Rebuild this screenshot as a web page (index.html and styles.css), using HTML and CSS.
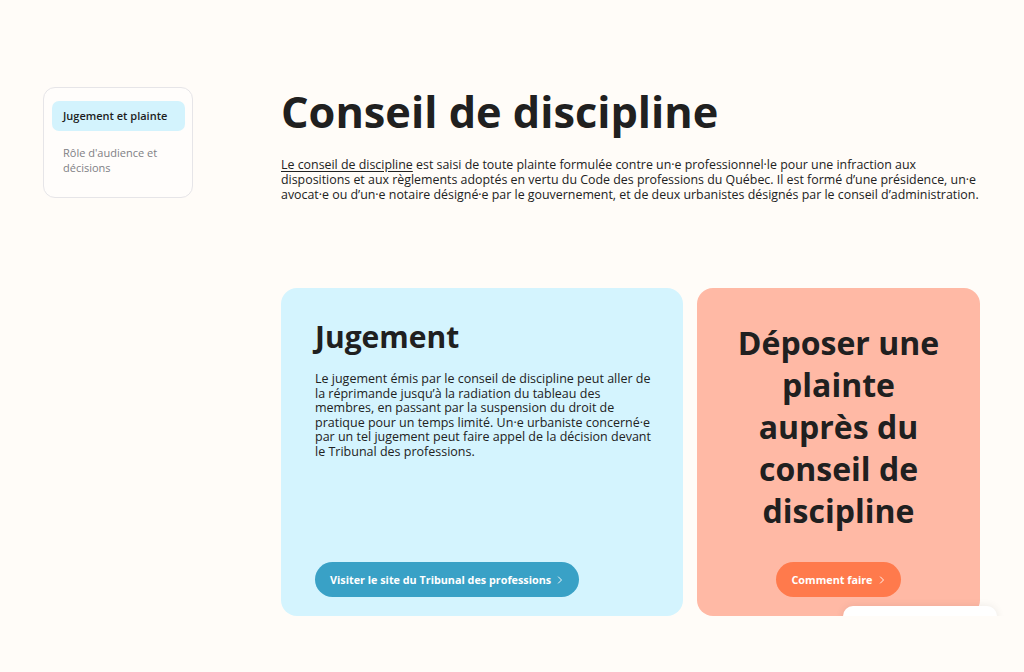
FILE: index.html
```html
<!DOCTYPE html>
<html lang="fr">
<head>
<meta charset="utf-8">
<title>Conseil de discipline</title>
<link rel="stylesheet" href="styles.css">
</head>
<body>
<div class="page">
  <aside class="side">
    <nav class="side-card">
      <a class="side-item active" href="#">Jugement et plainte</a>
      <a class="side-item" href="#">Rôle d'audience et décisions</a>
    </nav>
  </aside>
  <main class="main">
    <h1 class="title">Conseil de discipline</h1>
    <p class="intro"><a href="#" class="ulink">Le conseil de discipline</a> est saisi de toute plainte formulée contre un·e professionnel·le pour une infraction aux dispositions et aux règlements adoptés en vertu du Code des professions du Québec. Il est formé d’une présidence, un·e avocat·e ou d’un·e notaire désigné·e par le gouvernement, et de deux urbanistes désignés par le conseil d’administration.</p>
    <div class="cards">
      <section class="card card-blue">
        <h2 class="card-title">Jugement</h2>
        <p class="card-text">Le jugement émis par le conseil de discipline peut aller de la réprimande jusqu’à la radiation du tableau des membres, en passant par la suspension du droit de pratique pour un temps limité. Un·e urbaniste concerné·e par un tel jugement peut faire appel de la décision devant le Tribunal des professions.</p>
        <a class="btn btn-blue" href="#">Visiter le site du Tribunal des professions <svg class="chev" viewBox="0 0 8 12" width="6" height="10"><path d="M1.5 1.5 6 6 1.5 10.5" fill="none" stroke="currentColor" stroke-width="1.2"/></svg></a>
      </section>
      <section class="card card-salmon">
        <h2 class="card-title-c">Déposer une plainte auprès du conseil de discipline</h2>
        <a class="btn btn-orange" href="#">Comment faire <svg class="chev" viewBox="0 0 8 12" width="6" height="10"><path d="M1.5 1.5 6 6 1.5 10.5" fill="none" stroke="currentColor" stroke-width="1.2"/></svg></a>
      </section>
    </div>
  </main>
</div>
<div class="widget-clip"><div class="widget"></div></div>
</body>
</html>
```
FILE: styles.css
```css
* { box-sizing: border-box; }
html, body { margin: 0; padding: 0; }
body {
  background: #fffcf8;
  font-family: "Open Sans", "Noto Sans", sans-serif;
  color: #222222;
  height: 672px;
  overflow: hidden;
  position: relative;
}
.page {
  display: grid;
  grid-template-columns: 150px 1fr;
  column-gap: 88px;
  padding: 87px 44px 0 43px;
}
.side-card {
  display: flex;
  flex-direction: column;
  gap: 7px;
  border: 1px solid #e6e5e8;
  border-radius: 12px;
  background: #fffdfb;
  padding: 13px 7px 14px 8px;
}
.side-item {
  display: block;
  text-decoration: none;
  font-size: 11px;
  line-height: 15px;
  color: #808085;
  padding: 7px 10px 8px 11px;
  border-radius: 7px;
}
.side-item.active {
  background: #d3f3fd;
  color: #1d1d1d;
  font-weight: 600;
}
.main { min-width: 0; }
.title {
  margin: 0;
  font-size: 43.3px;
  line-height: 50px;
  font-weight: 700;
  color: #202020;
  letter-spacing: 0;
}
.intro {
  margin: 20px 0 0 0;
  font-size: 12.4px;
  line-height: 15px;
  color: #222;
}
.ulink { color: #222; text-decoration: underline; text-underline-offset: 2px; }
.cards {
  margin-top: 86px;
  display: grid;
  grid-template-columns: 402fr 283fr;
  gap: 14px;
  height: 328px;
}
.card {
  border-radius: 16px;
  display: flex;
  flex-direction: column;
}
.card-blue {
  background: #d4f4fe;
  padding: 28px 16px 19px 34px;
}
.card-salmon {
  background: #ffb9a5;
  padding: 34px 36px 19px 36px;
  align-items: center;
  text-align: center;
}
.card-title {
  margin: 0;
  font-size: 30px;
  line-height: 42px;
  font-weight: 700;
  color: #202020;
}
.card-text {
  margin: 14px 0 0 0;
  font-size: 12.5px;
  line-height: 14.6px;
  color: #222;
  max-width: 340px;
}
.card-title-c {
  margin: 0;
  font-size: 32px;
  line-height: 42px;
  font-weight: 700;
  color: #202020;
}
.btn {
  margin-top: auto;
  display: inline-flex;
  align-items: center;
  gap: 6px;
  height: 35px;
  padding: 0 16px 0 15px;
  border-radius: 18px;
  color: #ffffff;
  text-decoration: none;
  font-size: 10.8px;
  font-weight: 700;
  align-self: flex-start;
}
.card-salmon .btn { align-self: center; }
.btn-blue { background: #39a1c6; }
.btn-orange { background: #ff7a4c; }
.chev { display: block; }
.widget-clip {
  position: absolute;
  left: 830px;
  top: 596px;
  width: 190px;
  height: 20px;
  overflow: hidden;
}
.widget {
  position: absolute;
  left: 13px;
  top: 10px;
  width: 154px;
  height: 40px;
  background: #ffffff;
  border-radius: 10px;
  box-shadow: 0 0 8px rgba(0,0,0,0.08);
}
```
